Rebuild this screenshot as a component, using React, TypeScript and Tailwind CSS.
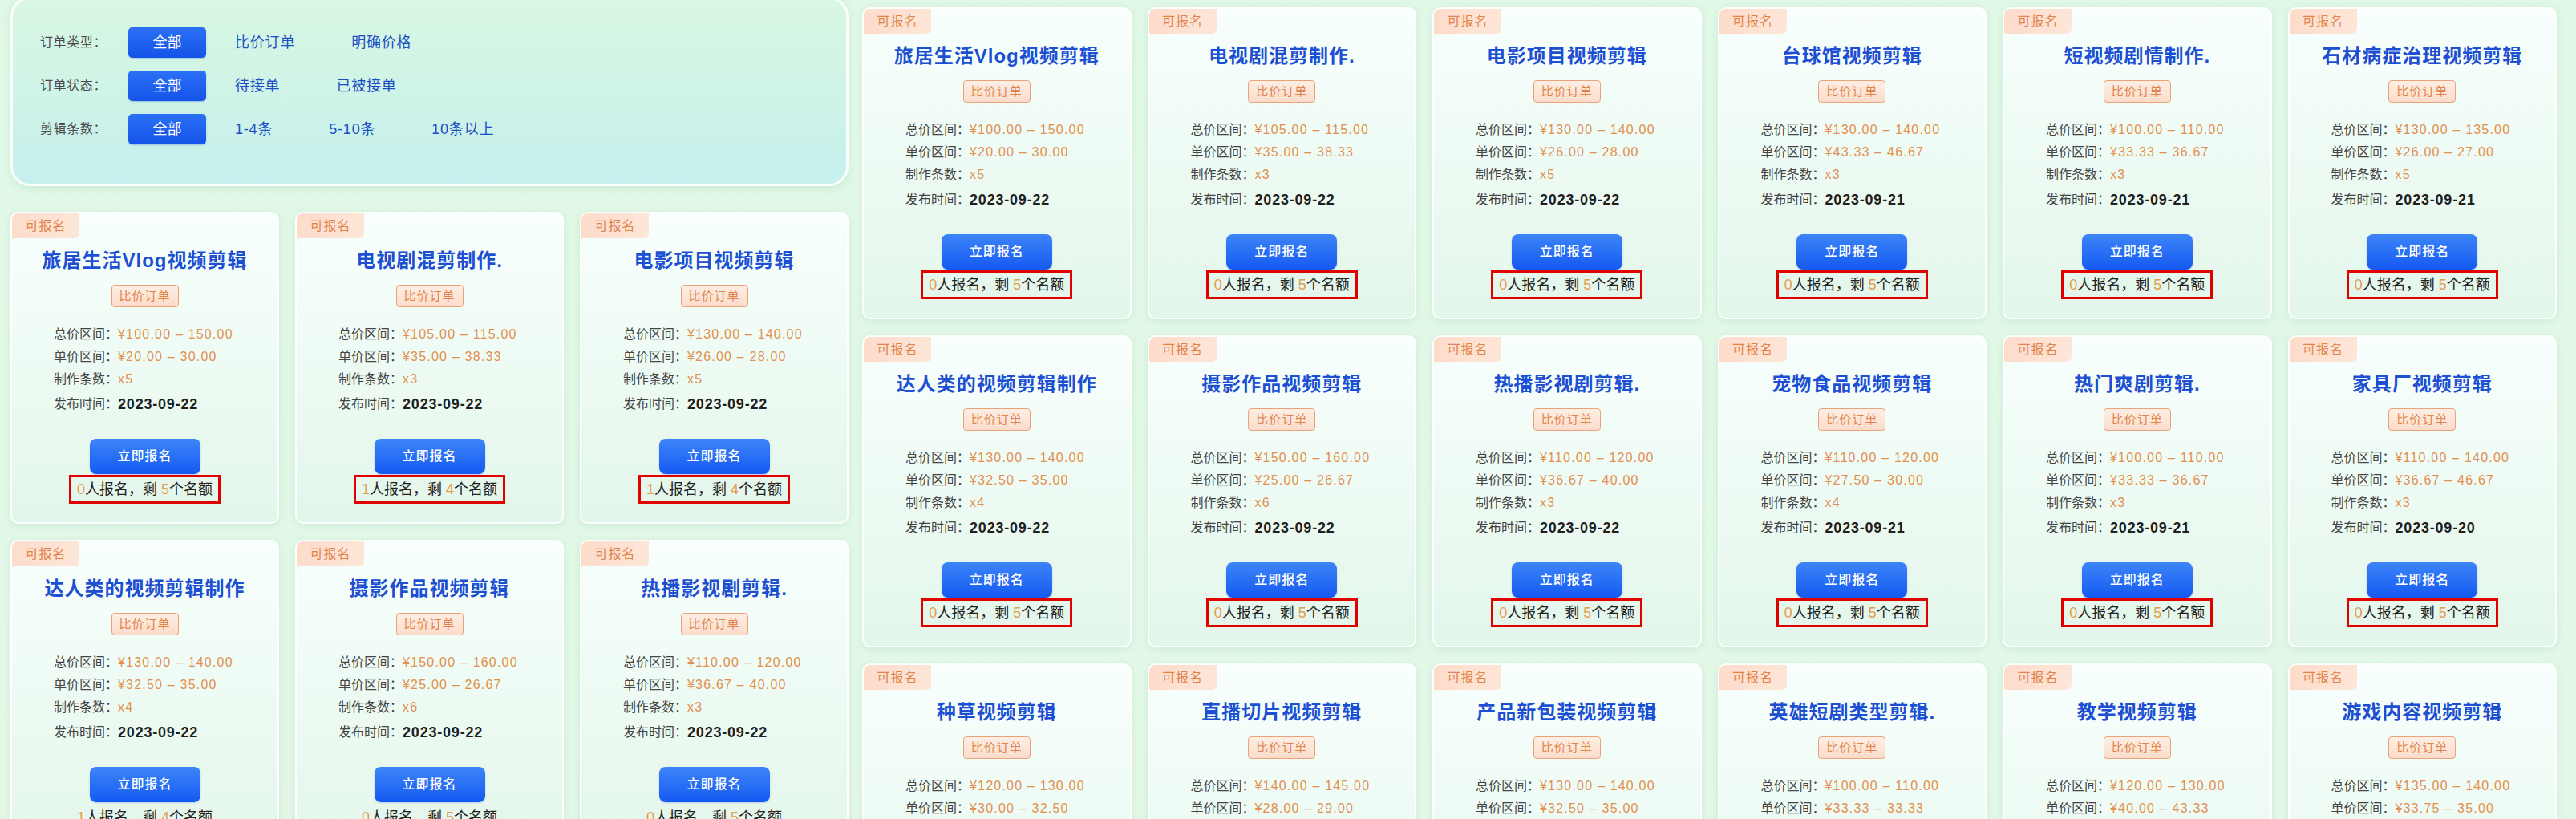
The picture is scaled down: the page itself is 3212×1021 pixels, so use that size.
import React from "react";

type Card = {
  t: string;
  total: string;
  unit: string;
  n: string;
  d: string;
  a: number;
  r: number;
  box: boolean;
};

const mk = (
  t: string,
  total: string,
  unit: string,
  n: string,
  d: string,
  a: number,
  r: number,
  box: boolean
): Card => ({ t, total, unit, n, d, a, r, box });

const leftCards: Card[] = [
  mk("旅居生活Vlog视频剪辑", "¥100.00 – 150.00", "¥20.00 – 30.00", "x5", "2023-09-22", 0, 5, true),
  mk("电视剧混剪制作.", "¥105.00 – 115.00", "¥35.00 – 38.33", "x3", "2023-09-22", 1, 4, true),
  mk("电影项目视频剪辑", "¥130.00 – 140.00", "¥26.00 – 28.00", "x5", "2023-09-22", 1, 4, true),
  mk("达人类的视频剪辑制作", "¥130.00 – 140.00", "¥32.50 – 35.00", "x4", "2023-09-22", 1, 4, false),
  mk("摄影作品视频剪辑", "¥150.00 – 160.00", "¥25.00 – 26.67", "x6", "2023-09-22", 0, 5, false),
  mk("热播影视剧剪辑.", "¥110.00 – 120.00", "¥36.67 – 40.00", "x3", "2023-09-22", 0, 5, false),
];

const rightCards: Card[] = [
  mk("旅居生活Vlog视频剪辑", "¥100.00 – 150.00", "¥20.00 – 30.00", "x5", "2023-09-22", 0, 5, true),
  mk("电视剧混剪制作.", "¥105.00 – 115.00", "¥35.00 – 38.33", "x3", "2023-09-22", 0, 5, true),
  mk("电影项目视频剪辑", "¥130.00 – 140.00", "¥26.00 – 28.00", "x5", "2023-09-22", 0, 5, true),
  mk("台球馆视频剪辑", "¥130.00 – 140.00", "¥43.33 – 46.67", "x3", "2023-09-21", 0, 5, true),
  mk("短视频剧情制作.", "¥100.00 – 110.00", "¥33.33 – 36.67", "x3", "2023-09-21", 0, 5, true),
  mk("石材病症治理视频剪辑", "¥130.00 – 135.00", "¥26.00 – 27.00", "x5", "2023-09-21", 0, 5, true),
  mk("达人类的视频剪辑制作", "¥130.00 – 140.00", "¥32.50 – 35.00", "x4", "2023-09-22", 0, 5, true),
  mk("摄影作品视频剪辑", "¥150.00 – 160.00", "¥25.00 – 26.67", "x6", "2023-09-22", 0, 5, true),
  mk("热播影视剧剪辑.", "¥110.00 – 120.00", "¥36.67 – 40.00", "x3", "2023-09-22", 0, 5, true),
  mk("宠物食品视频剪辑", "¥110.00 – 120.00", "¥27.50 – 30.00", "x4", "2023-09-21", 0, 5, true),
  mk("热门爽剧剪辑.", "¥100.00 – 110.00", "¥33.33 – 36.67", "x3", "2023-09-21", 0, 5, true),
  mk("家具厂视频剪辑", "¥110.00 – 140.00", "¥36.67 – 46.67", "x3", "2023-09-20", 0, 5, true),
  mk("种草视频剪辑", "¥120.00 – 130.00", "¥30.00 – 32.50", "x4", "2023-09-20", 0, 5, true),
  mk("直播切片视频剪辑", "¥140.00 – 145.00", "¥28.00 – 29.00", "x5", "2023-09-20", 0, 5, true),
  mk("产品新包装视频剪辑", "¥130.00 – 140.00", "¥32.50 – 35.00", "x4", "2023-09-20", 0, 5, true),
  mk("英雄短剧类型剪辑.", "¥100.00 – 110.00", "¥33.33 – 33.33", "x3", "2023-09-20", 0, 5, true),
  mk("教学视频剪辑", "¥120.00 – 130.00", "¥40.00 – 43.33", "x3", "2023-09-20", 0, 5, true),
  mk("游戏内容视频剪辑", "¥135.00 – 140.00", "¥33.75 – 35.00", "x4", "2023-09-20", 0, 5, true),
];

function InfoRow({ label, value, date }: { label: string; value: string; date?: boolean }) {
  return (
    <div className="flex items-center h-[28px] whitespace-nowrap">
      <span className="text-[16px] text-[#444444]">{label}</span>
      {date ? (
        <span className="text-[18px] tracking-[0.8px] font-bold text-[#1f1f1f]">{value}</span>
      ) : (
        <span className="text-[16px] tracking-[1.2px] text-[#e2904f]">{value}</span>
      )}
    </div>
  );
}

function JobCard({ c }: { c: Card }) {
  return (
    <div className="relative flex flex-col items-center h-[389px] rounded-[10px] border-2 border-white/90 bg-gradient-to-b from-[#f8fffd] to-[#e3f6ea] shadow-[0_2px_8px_rgba(60,140,90,0.12)] overflow-hidden">
      <div className="self-start flex items-center justify-center h-[31px] w-[84px] bg-gradient-to-r from-[#fddccb] to-[#fde6d8] rounded-br-[6px] text-[16px] tracking-[1px] text-[#e1834a]">
        可报名
      </div>
      <div className="mt-[11px] h-[34px] leading-[34px] text-[24px] tracking-[1px] font-bold text-[#1c4fd2] whitespace-nowrap">
        {c.t}
      </div>
      <div className="mt-[13px] flex items-center justify-center h-[28px] w-[84px] rounded-[4px] border border-[#e9a379] bg-gradient-to-b from-[#fdeee4] to-[#fcdccb] text-[15px] tracking-[1px] text-[#e0844b]">
        比价订单
      </div>
      <div className="mt-[20px] self-stretch pl-[52px] flex flex-col">
        <InfoRow label="总价区间：" value={c.total} />
        <InfoRow label="单价区间：" value={c.unit} />
        <InfoRow label="制作条数：" value={c.n} />
        <div className="mt-[3px]">
          <InfoRow label="发布时间：" value={c.d} date />
        </div>
      </div>
      <div className="mt-[29px] flex items-center justify-center h-[44px] w-[138px] rounded-[8px] bg-gradient-to-b from-[#3d84f8] to-[#1559f1] text-white text-[16px] tracking-[1px] font-medium shadow-[0_1px_2px_rgba(20,80,200,0.25)]">
        立即报名
      </div>
      <div
        className={
          c.box
            ? "mt-[1px] flex items-center justify-center h-[36px] px-[7px] border-[3px] border-[#e10000] text-[18px] text-[#222222] whitespace-nowrap"
            : "mt-[1px] flex items-center justify-center h-[36px] px-[7px] border-[3px] border-transparent text-[18px] text-[#222222] whitespace-nowrap"
        }
      >
        <span>
          <span className="text-[#e59c4f]">{c.a}</span>人报名，剩 <span className="text-[#e59c4f]">{c.r}</span>个名额
        </span>
      </div>
    </div>
  );
}

function FilterRow({ label, options }: { label: string; options: string[] }) {
  return (
    <div className="flex items-center h-[38px]">
      <div className="w-[110px] text-[16px] tracking-[0.6px] text-[#4a4a4a]">{label}</div>
      <div className="flex items-center gap-[2px]">
        <div className="flex items-center justify-center w-[97px] h-[38px] rounded-[5px] bg-gradient-to-b from-[#2c70f6] to-[#1453e8] text-white text-[18px] shadow-[0_1px_2px_rgba(20,80,200,0.3)]">
          全部
        </div>
        {options.map((o) => (
          <div key={o} className="px-[34px] text-[18px] tracking-[0.8px] text-[#1d4fc4] whitespace-nowrap">
            {o}
          </div>
        ))}
      </div>
    </div>
  );
}

export default function App() {
  return (
    <div className="w-[3212px] h-[1021px] overflow-hidden bg-gradient-to-b from-[#e0f8e6] to-[#e3f7e7] flex items-start gap-[17px] pl-[13px] [font-family:'Liberation_Sans','Noto_Sans_CJK_SC',sans-serif]">
      <div className="w-[1045px] shrink-0 flex flex-col">
        <div className="shrink-0 -mt-[4px] h-[236px] rounded-[24px] border-[3px] border-white/90 bg-gradient-to-b from-[#d9f7e2] to-[#c5f0ed] shadow-[0_3px_10px_rgba(80,170,120,0.18)] pt-[35px] pl-[34px] flex flex-col gap-[16px]">
          <FilterRow label="订单类型：" options={["比价订单", "明确价格"]} />
          <FilterRow label="订单状态：" options={["待接单", "已被接单"]} />
          <FilterRow label="剪辑条数：" options={["1-4条", "5-10条", "10条以上"]} />
        </div>
        <div className="shrink-0 mt-[32px] grid grid-cols-3 gap-x-[20px] gap-y-[20px]">
          {leftCards.map((c, i) => (
            <JobCard key={i} c={c} />
          ))}
        </div>
      </div>
      <div className="w-[2113px] shrink-0 pt-[9px]">
        <div className="grid grid-cols-6 gap-x-[20px] gap-y-[20px]">
          {rightCards.map((c, i) => (
            <JobCard key={i} c={c} />
          ))}
        </div>
      </div>
    </div>
  );
}
